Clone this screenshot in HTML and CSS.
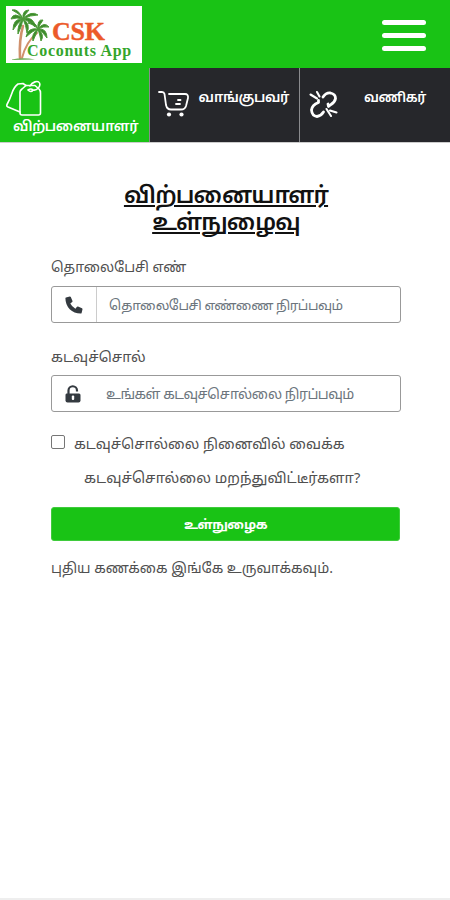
FILE: index.html
```html
<!DOCTYPE html>
<html lang="ta">
<head>
    <meta charset="UTF-8" />
    <meta name="viewport" content="width=device-width, initial-scale=1.0"/>
    <title>CSK Coconuts App</title>
    <link rel="stylesheet" href="styles.css">
</head>
<body>

    <!-- Header -->
    <header class="navbar">
        <a class="logo" href="#">
            <svg class="logo-tree" viewBox="0 0 46 57" width="46" height="57">
                <g fill="none" stroke="#d0906c" stroke-linecap="round">
                    <path d="M17 20 Q13 34 14 52" stroke-width="2.600"/>
                    <path d="M31 27 Q20 36 16 52" stroke-width="2"/>
                </g>
                <g fill="#3c8a2c" stroke="#4d9a38" stroke-width="1">
                    <path d="M17 13 Q12 2 6 4 Q13 7 17 13Z"/>
                    <path d="M17 13 Q8 5 5 13 Q11 11 17 13Z"/>
                    <path d="M17 13 Q7 12 7 24 Q11 17 17 13Z"/>
                    <path d="M17 13 Q11 19 12 28 Q16 20 17 13Z"/>
                    <path d="M17 13 Q16 4 23 4 Q19 8 17 13Z"/>
                    <path d="M17 13 Q25 4 32 9 Q24 9 17 13Z"/>
                    <path d="M17 13 Q28 10 29 21 Q24 15 17 13Z"/>
                    <path d="M17 13 Q25 18 21 27 Q20 19 17 13Z"/>
                    <path d="M32 23 Q28 13 22 17 Q28 18 32 23Z"/>
                    <path d="M32 23 Q22 21 20 31 Q26 25 32 23Z"/>
                    <path d="M32 23 Q25 28 27 35 Q30 28 32 23Z"/>
                    <path d="M32 23 Q31 13 37 14 Q34 18 32 23Z"/>
                    <path d="M32 23 Q38 15 43 21 Q37 20 32 23Z"/>
                    <path d="M32 23 Q41 22 41 32 Q37 26 32 23Z"/>
                    <path d="M32 23 Q39 29 35 35 Q34 29 32 23Z"/>
                </g>
                <path d="M6 53.500 Q17 51 29 53.500 L6 54Z" fill="#6cae55"/>
            </svg>
            <span class="logo-text">
                <span class="logo-name">CSK</span>
                <span class="logo-sub">Coconuts App</span>
            </span>
        </a>
        <button class="menu-btn" aria-label="Menu">
            <span></span>
            <span></span>
            <span></span>
        </button>
    </header>

    <!-- User type tabs -->
    <nav class="tabs">
        <a class="tab tab-seller active" href="#">
            <svg width="38" height="38" viewBox="0 0 38 38" fill="none" stroke="#fff" stroke-width="1.600" stroke-linejoin="round" stroke-linecap="round">
                <path d="M14 12 Q14 10.500 16 9 L20 5.500 H29 L33 9 Q34.500 10.500 34.500 13 V33 Q34.500 35 32.500 35 H16 Q14 35 14 33Z"/>
                <path d="M20 5.500 L17 3.500 L12 4 Q8 7 6 13 Q4 19 1 24.500 Q0 26 2 27 L14 32"/>
                <path d="M22 10 Q25 8 27 10 Q25 13 22 10 M24 6 C26 2 32 0 33.500 3 C35 6 31 11 27 10"/>
            </svg>
            <span class="tab-text">விற்பனையாளர்</span>
        </a>
        <a class="tab tab-buyer" href="#">
            <svg width="32" height="28" viewBox="0 0 32 28" fill="none" stroke="#fff" stroke-width="1.800" stroke-linejoin="round" stroke-linecap="round">
                <path d="M1 2 H4 Q6 2 6.500 4 L8 15 Q9 19.500 13 19.500 H23 Q27 19.500 28 16 L30 8 Q30.500 4 27 4 H11"/>
                <path d="M20 10 H22.500 M18 14 H22"/>
                <g fill="#fff" stroke="none">
                    <circle cx="11" cy="24.500" r="2.100"/>
                    <circle cx="23.500" cy="24.500" r="2.100"/>
                </g>
            </svg>
            <span class="tab-text">வாங்குபவர்</span>
        </a>
        <a class="tab tab-trader" href="#">
            <svg width="30" height="30" viewBox="0 0 30 30" fill="none" stroke="#fff" stroke-width="2.800" stroke-linecap="round" stroke-linejoin="round">
                <path d="M14 7 Q17 2.500 21.500 3 Q26.500 4 26.500 8.500 Q26 12 22 14.500 L19.500 16.500 L19 14"/>
                <path d="M9.500 10.500 L9.500 12.500 Q3 15 2.500 20 Q3 26 8 26.500 Q12 26 14.500 22"/>
                <path d="M1.500 4.500 L8 8.500 M8 2 L10.500 6.500 M17.500 19 L22 26 M21 20.500 L27.500 22.500" stroke-width="2.100"/>
            </svg>
            <span class="tab-text">வணிகர்</span>
        </a>
    </nav>

    <!-- Login form -->
    <main class="section">
        <h1 class="title">விற்பனையாளர்<br>உள்நுழைவு</h1>
        <form class="login-form">
            <label class="label-phone" for="phone">தொலைபேசி எண்</label>
            <div class="input-group">
                <span class="input-icon bordered">
                    <svg width="18" height="18" viewBox="0 0 18 18" fill="#343a40">
                        <path d="M1 1.500 L4.800 .5 Q5.500 .4 5.800 1 L7.500 5 Q7.700 5.600 7.200 6 L5.300 7.600 Q7 11 10.400 12.700 L12 10.800 Q12.400 10.300 13 10.500 L17 12.200 Q17.600 12.500 17.500 13.200 L16.600 17 Q16.400 17.600 15.800 17.600 Q9 17.400 4.700 13.200 Q.5 9 .4 2.300 Q.4 1.700 1 1.500Z"/>
                    </svg>
                </span>
                <input class="phone" type="text" id="phone" placeholder="தொலைபேசி எண்ணை நிரப்பவும்" />
            </div>

            <label class="label-pass" for="password">கடவுச்சொல்</label>
            <div class="input-group">
                <span class="input-icon">
                    <svg width="16" height="18" viewBox="0 0 16 18">
                        <path d="M3.500 9 V5.500 A4.200 4.200 0 0 1 12 5.500 V6.500" fill="none" stroke="#343a40" stroke-width="2.200"/>
                        <path d="M1.500 8.500 H14 Q15.500 8.500 15.500 10 V15.500 Q15.500 17.500 13.500 17.500 H2.500 Q.5 17.500 .5 15.500 V10 Q.5 8.500 1.500 8.500Z" fill="#343a40"/>
                        <rect x="6.800" y="10.500" width="2.400" height="4.500" rx="1" fill="#fff"/>
                    </svg>
                </span>
                <input class="password" type="text" id="password" placeholder="உங்கள் கடவுச்சொல்லை நிரப்பவும்" />
            </div>

            <div class="remember">
                <input type="checkbox" id="remember" />
                <label class="label-remember" for="remember">கடவுச்சொல்லை நினைவில் வைக்க</label>
            </div>
            <a class="forgot" href="#">கடவுச்சொல்லை மறந்துவிட்டீர்களா?</a>
            <button class="btn-login" type="button">உள்நுழைக</button>
            <a class="register" href="#">புதிய கணக்கை இங்கே உருவாக்கவும்.</a>
        </form>
    </main>

    <footer class="footer"></footer>
</body>
</html>
```
FILE: styles.css
```css
* {
    box-sizing: border-box;
}

body {
    margin: 0;
    height: 900px;
    display: flex;
    flex-direction: column;
    background-color: #fff;
    color: #505050;
    font-family: "Noto Sans", "Noto Sans Tamil", sans-serif;
    font-size: 14px;
}

a {
    color: inherit;
    text-decoration: none;
}

svg {
    flex: none;
    display: block;
}

/* Header */
.navbar {
    height: 68px;
    display: flex;
    justify-content: space-between;
    align-items: flex-start;
    padding: 6px 24px 0 6px;
    background-color: #19c315;
}

.logo {
    width: 136px;
    height: 57px;
    display: flex;
    background-color: #fff;
    font-family: "Liberation Serif", serif;
    font-weight: bold;
    overflow: hidden;
}

.logo-text {
    display: flex;
    flex-direction: column;
    margin-left: -25px;
    padding-top: 14px;
    white-space: nowrap;
}

.logo-name {
    margin-left: 25px;
    color: #ec5a29;
    font-size: 26px;
    line-height: 23px;
    letter-spacing: -0.3px;
    -webkit-text-stroke: 0.4px #ec5a29;
}

.logo-sub {
    color: #35a52b;
    font-size: 16px;
    line-height: 15px;
    letter-spacing: 0.7px;
}

.menu-btn {
    width: 44px;
    display: flex;
    flex-direction: column;
    gap: 8px;
    margin-top: 14px;
    padding: 0;
    border: none;
    background: none;
}

.menu-btn span {
    height: 5px;
    border-radius: 3px;
    background-color: #fff;
}

/* Tabs */
.tabs {
    height: 75px;
    display: flex;
    border-bottom: 1px solid #ccc;
}

.tab {
    flex: none;
    width: 150px;
    display: flex;
    justify-content: space-between;
    align-items: flex-start;
    background-color: #26272b;
    border-right: 1px solid #8a8b8e;
    color: #fff;
    font-weight: 600;
    font-size: 14px;
    line-height: 20px;
    letter-spacing: -0.4px;
    white-space: nowrap;
}

.tab:last-child {
    border-right: none;
}

.tab.active {
    background-color: #19c315;
}

.tab-seller {
    flex-direction: column;
    justify-content: flex-start;
    padding: 12px 0 0 6px;
}

.tab-seller .tab-text {
    margin: -2px 0 0 7px;
}

.tab-buyer {
    padding: 22px 10px 0 8px;
}

.tab-trader {
    padding: 22px 24px 0 9px;
}

.tab-buyer .tab-text,
.tab-trader .tab-text {
    margin-top: -3px;
}

.tab-trader .tab-text {
    font-size: 13.5px;
}

/* Login form */
.section {
    flex: 1;
    padding: 38px 49px 0 51px;
}

.title {
    margin: 0;
    color: #111;
    font-size: 23px;
    font-weight: 600;
    line-height: 27px;
    letter-spacing: -0.9px;
    text-align: center;
    text-decoration: underline;
    text-decoration-thickness: 2px;
    text-underline-offset: 2px;
}

.login-form {
    display: flex;
    flex-direction: column;
    align-items: flex-start;
    margin-top: 22px;
    white-space: nowrap;
}

.login-form label,
.forgot,
.register {
    line-height: 20px;
}

.label-pass {
    font-size: 14.5px;
}

.input-group {
    width: 350px;
    height: 37px;
    display: flex;
    margin: 9px 0 23px;
    border: 1px solid #999;
    border-radius: 3px;
}

.input-icon {
    width: 45px;
    display: flex;
    align-items: center;
    padding-left: 13px;
}

.input-icon.bordered {
    border-right: 1px solid #ccc;
}

.input-group input {
    flex: 1;
    min-width: 0;
    padding: 0 0 0 12px;
    border: none;
    background: none;
    font: inherit;
    font-size: 13.5px;
    letter-spacing: -0.5px;
}

.input-group .password {
    padding-left: 9px;
    font-size: 14px;
}

.input-group input::placeholder {
    color: #6c757d;
    opacity: 1;
}

.remember {
    display: flex;
    gap: 9px;
    height: 20px;
}

.remember input {
    appearance: none;
    width: 14px;
    height: 14px;
    margin: 0;
    border: 1px solid #767676;
    border-radius: 2px;
}

.label-remember {
    margin-top: -1px;
    font-size: 14.4px;
}

.forgot {
    margin: 12px 0 0 33px;
    font-size: 14.6px;
}

.btn-login {
    width: 349px;
    height: 34px;
    margin: 20px 0 17px;
    padding: 0;
    border: 1px solid #3fcb3c;
    border-radius: 3px;
    background-color: #19c315;
    color: #fff;
    font: inherit;
    font-size: 13px;
    font-weight: 700;
    letter-spacing: -0.6px;
}

/* Footer line */
.footer {
    height: 2px;
    background-color: #eee;
}
```
